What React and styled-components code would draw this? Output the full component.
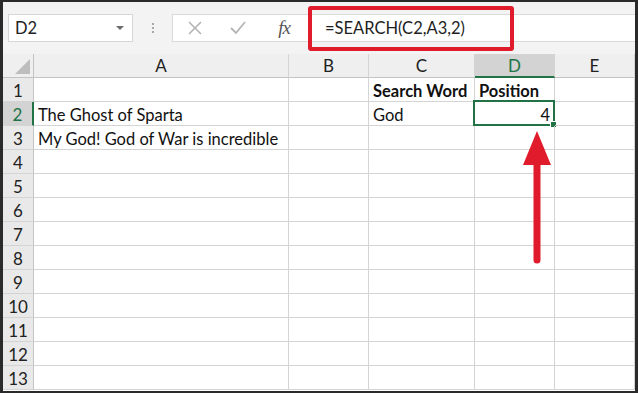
import React from "react";
import styled, { createGlobalStyle } from "styled-components";

const GRID = "#d4d4d4";
const GREEN = "#217346";
const RED = "#e01b2b";

const GlobalStyle = createGlobalStyle`
  html, body {
    margin: 0;
    padding: 0;
    background: #ffffff;
  }
  body {
    font-family: "Lato", "Liberation Sans", sans-serif;
  }
`;

const Frame = styled.div`
  position: relative;
  width: 638px;
  height: 393px;
  box-sizing: border-box;
  border: 2px solid #2a2a2a;
  border-left-width: 3px;
  border-right-width: 3px;
  border-bottom-width: 2px;
  overflow: hidden;
  background: #ffffff;
`;

const Toolbar = styled.div`
  display: flex;
  align-items: center;
  height: 52px;
  padding-left: 5px;
  background: #f3f3f3;
`;

const NameBox = styled.div`
  display: flex;
  align-items: center;
  justify-content: space-between;
  box-sizing: border-box;
  width: 125px;
  height: 28px;
  padding: 0 8px 0 6px;
  background: #ffffff;
  border: 1px solid #d6d6d6;
  font-size: 16.5px;
  color: #222;
`;

const Caret = styled.span`
  width: 0;
  height: 0;
  border-left: 4px solid transparent;
  border-right: 4px solid transparent;
  border-top: 4px solid #6a6a6a;
`;

const Splitter = styled.div`
  display: flex;
  flex-direction: column;
  align-items: center;
  gap: 2px;
  width: 39px;
`;

const Dot = styled.span`
  width: 2px;
  height: 2px;
  background: #a8a8a8;
`;

const FormulaBar = styled.div`
  position: relative;
  display: flex;
  align-items: center;
  flex: 1;
  height: 28px;
  box-sizing: border-box;
  background: #ffffff;
  border: 1px solid #dadada;
  border-right: none;
`;

const IconSlot = styled.div`
  display: flex;
  align-items: center;
  justify-content: center;
  width: ${(p) => p.$w}px;
  height: 100%;
`;

const Fx = styled.span`
  font-family: "Liberation Serif", serif;
  font-style: italic;
  font-size: 19px;
  color: #555;
  letter-spacing: -1px;
`;

const FormulaText = styled.span`
  margin-left: 16px;
  font-size: 16.5px;
  color: #1e1e1e;
`;

const Highlight = styled.div`
  position: absolute;
  left: 135px;
  top: -9px;
  width: 206px;
  height: 45px;
  box-sizing: border-box;
  border: 4px solid ${RED};
  border-radius: 3px;
`;

const Sheet = styled.div`
  position: relative;
  display: grid;
  grid-template-columns: 31px 255px 80px 106px 80px 80px;
  grid-auto-rows: 24px;
`;

const ColHead = styled.div`
  display: flex;
  align-items: center;
  justify-content: center;
  box-sizing: border-box;
  background: ${(p) => (p.$active ? "#d3d3d3" : "#efefef")};
  border-right: 1px solid ${GRID};
  border-bottom: ${(p) => (p.$active ? `2px solid ${GREEN}` : `1px solid #c4c4c4`)};
  font-size: 17px;
  color: ${(p) => (p.$active ? GREEN : "#222")};
`;

const Corner = styled.div`
  position: relative;
  box-sizing: border-box;
  background: #efefef;
  border-right: 1px solid #c4c4c4;
  border-bottom: 1px solid #c4c4c4;
`;

const CornerMark = styled.span`
  position: absolute;
  right: 3px;
  bottom: 3px;
  width: 0;
  height: 0;
  border-left: 15px solid transparent;
  border-bottom: 15px solid #bdbdbd;
`;

const RowHead = styled.div`
  display: flex;
  align-items: flex-end;
  justify-content: center;
  box-sizing: border-box;
  background: ${(p) => (p.$active ? "#d3d3d3" : "#e9e9e9")};
  border-right: ${(p) => (p.$active ? `2px solid ${GREEN}` : `1px solid #c4c4c4`)};
  border-bottom: 1px solid ${GRID};
  font-size: 17px;
  color: ${(p) => (p.$active ? GREEN : "#222")};
`;

const Cell = styled.div`
  position: relative;
  display: flex;
  align-items: flex-end;
  justify-content: ${(p) => (p.$right ? "flex-end" : "flex-start")};
  padding: 0 4px;
  box-sizing: border-box;
  border-right: 1px solid ${GRID};
  border-bottom: 1px solid ${GRID};
  font-size: 16.5px;
  font-weight: ${(p) => (p.$bold ? 700 : 400)};
  color: #111;
  white-space: nowrap;
  overflow: visible;
`;

const Selection = styled.div`
  position: absolute;
  left: -2px;
  top: -2px;
  right: -1px;
  bottom: -1px;
  border: 2px solid ${GREEN};
  pointer-events: none;
`;

const FillHandle = styled.span`
  position: absolute;
  right: -4px;
  bottom: -4px;
  width: 5px;
  height: 5px;
  background: ${GREEN};
  border: 1px solid #ffffff;
`;

const Arrow = styled.svg`
  position: absolute;
  left: 517px;
  top: 76px;
`;

const columns = ["A", "B", "C", "D", "E"];

const data = {
  1: { C: { text: "Search Word", bold: true }, D: { text: "Position", bold: true } },
  2: { A: { text: "The Ghost of Sparta" }, C: { text: "God" }, D: { text: "4", right: true } },
  3: { A: { text: "My God! God of War is incredible" } },
};

const rows = Array.from({ length: 13 }, (_, i) => i + 1);

export default function App() {
  return (
    <>
      <GlobalStyle />
      <Frame>
        <Toolbar>
          <NameBox>
            <span>D2</span>
            <Caret />
          </NameBox>
          <Splitter>
            <Dot />
            <Dot />
            <Dot />
          </Splitter>
          <FormulaBar>
            <IconSlot $w={44}>
              <svg width="14" height="14" viewBox="0 0 14 14">
                <path d="M1 1 L13 13 M13 1 L1 13" stroke="#b4b4b4" strokeWidth="1.6" fill="none" />
              </svg>
            </IconSlot>
            <IconSlot $w={42}>
              <svg width="16" height="14" viewBox="0 0 16 14">
                <path d="M1 7 L6 12 L15 1" stroke="#b4b4b4" strokeWidth="1.8" fill="none" />
              </svg>
            </IconSlot>
            <IconSlot $w={50}>
              <Fx>fx</Fx>
            </IconSlot>
            <FormulaText>=SEARCH(C2,A3,2)</FormulaText>
            <Highlight />
          </FormulaBar>
        </Toolbar>
        <Sheet>
          <Corner>
            <CornerMark />
          </Corner>
          {columns.map((c) => (
            <ColHead key={c} $active={c === "D"}>
              {c}
            </ColHead>
          ))}
          {rows.map((r) => (
            <React.Fragment key={r}>
              <RowHead $active={r === 2}>{r}</RowHead>
              {columns.map((c) => {
                const cell = (data[r] && data[r][c]) || {};
                const selected = r === 2 && c === "D";
                return (
                  <Cell key={c} $bold={cell.bold} $right={cell.right}>
                    {cell.text}
                    {selected && (
                      <Selection>
                        <FillHandle />
                      </Selection>
                    )}
                  </Cell>
                );
              })}
            </React.Fragment>
          ))}
          <Arrow width="34" height="136" viewBox="0 0 34 136">
            <path d="M17 1 L31 35 L3 35 Z" fill={RED} />
            <line x1="17" y1="30" x2="17" y2="130" stroke={RED} strokeWidth="7" strokeLinecap="round" />
          </Arrow>
        </Sheet>
      </Frame>
    </>
  );
}
